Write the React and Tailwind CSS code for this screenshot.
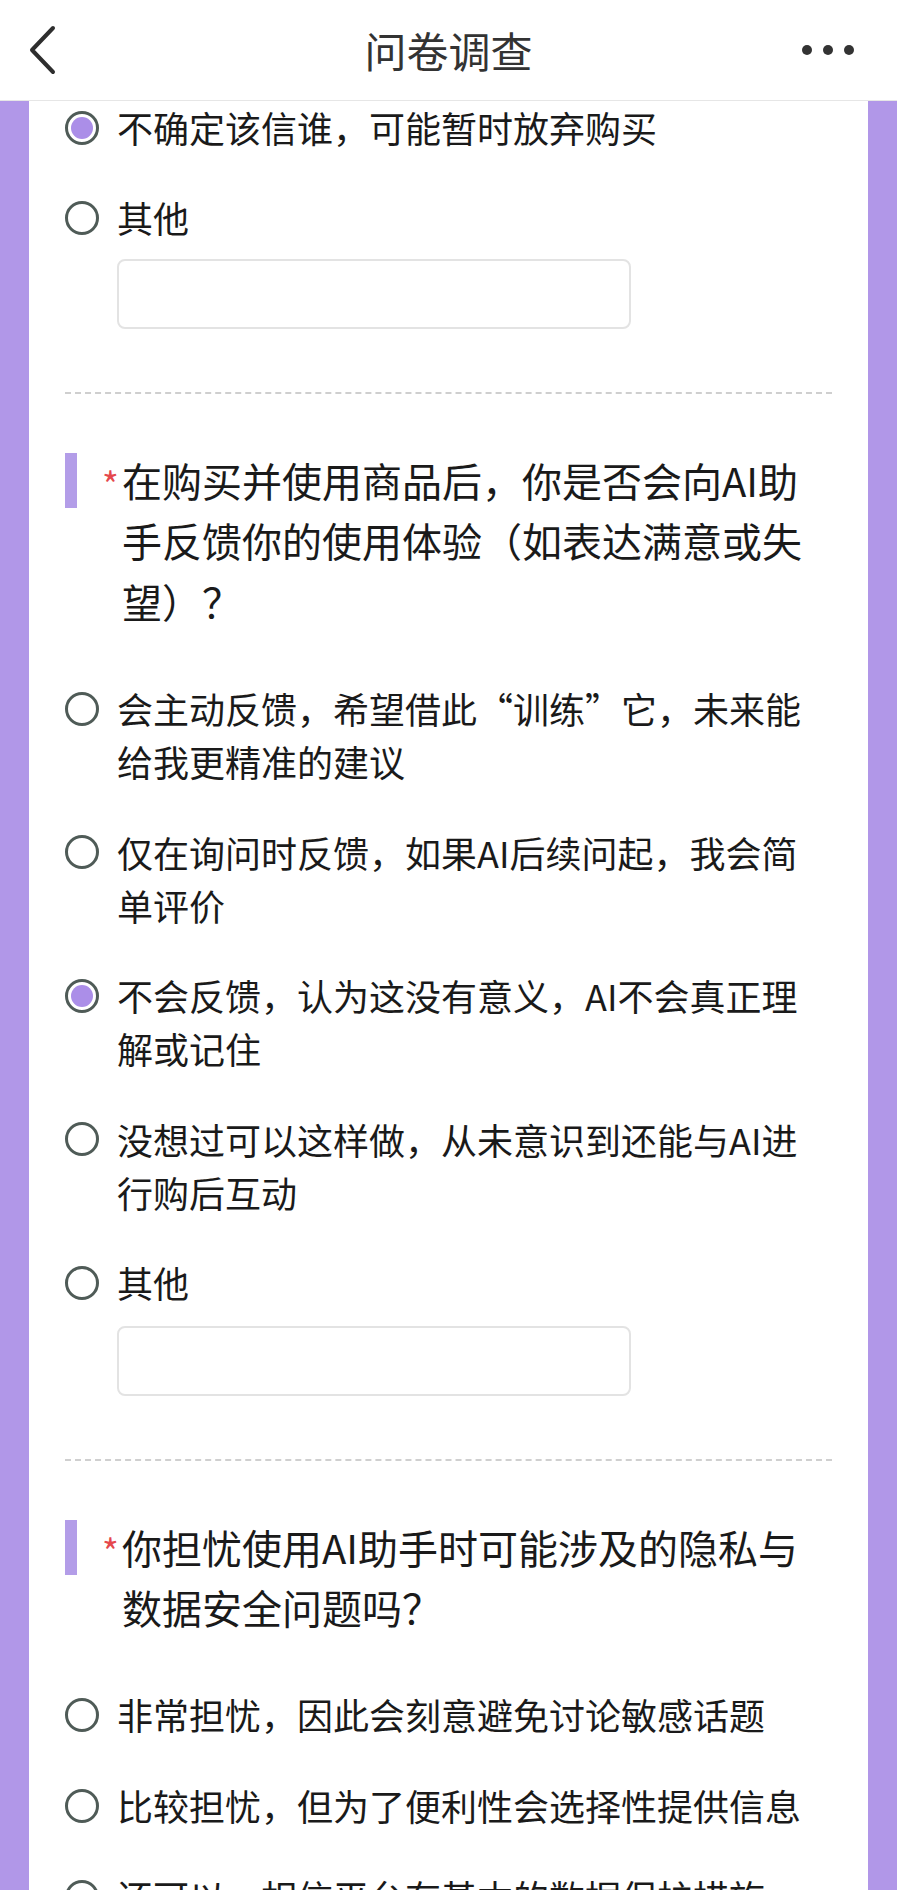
import React from "react";

const font = { fontFamily: '"Noto Sans CJK SC", "Noto Sans", sans-serif' };

// 单选圆圈
const Radio = ({ checked }) => (
    <span className="mt-[9.5px] flex h-[34px] w-[34px] shrink-0 items-center justify-center rounded-full border-[3px] border-[#4f5b57] bg-white">
        {checked && <span className="h-[22px] w-[22px] rounded-full bg-[#ab8ee8]" />}
    </span>
);

const Option = ({ lines, checked }) => (
    <div className="flex items-start gap-[18px]">
        <Radio checked={checked} />
        <div className="text-[36px] leading-[53px] text-[#1a1a1a] whitespace-nowrap">
            {lines.map((l) => (
                <div key={l}>{l}</div>
            ))}
        </div>
    </div>
);

const OtherInput = ({ className }) => (
    <div className={`ml-[52px] h-[70px] w-[514px] rounded-[8px] border-2 border-[#e3e3e3] bg-white ${className}`} />
);

const Question = ({ lines }) => (
    <div className="flex items-start">
        <span className="h-[55px] w-[12px] shrink-0 bg-[#b39de8]" />
        <span className="ml-[25px] w-[20px] shrink-0 text-[36px] leading-[60px] text-[#e5484d]">*</span>
        <div className="-mt-[3px] text-[40px] leading-[60.5px] text-[#1a1a1a] whitespace-nowrap">
            {lines.map((l) => (
                <div key={l}>{l}</div>
            ))}
        </div>
    </div>
);

const Divider = () => <div className="border-t-2 border-dashed border-[#cfcfcf]" />;

export default function App() {
    return (
        <div className="h-[1890px] w-[897px] overflow-hidden bg-[#b197e8]" style={font}>
            {/* 顶部导航 */}
            <div className="grid h-[101px] grid-cols-[1fr_auto_1fr] items-center border-b border-[#e6e6e6] bg-white px-[28px]">
                <svg width="30" height="50" viewBox="0 0 30 50" fill="none" stroke="#2e2e2e" strokeWidth="4" strokeLinecap="round" strokeLinejoin="round">
                    <path d="M25 3 L4 25 L25 47" />
                </svg>
                <div className="text-[42px] leading-none text-[#333]">问卷调查</div>
                <div className="flex items-center justify-end gap-[11px] pr-[15px]">
                    <span className="h-[10px] w-[10px] rounded-full bg-[#333]" />
                    <span className="h-[10px] w-[10px] rounded-full bg-[#333]" />
                    <span className="h-[10px] w-[10px] rounded-full bg-[#333]" />
                </div>
            </div>

            {/* 问卷内容 */}
            <div className="mx-[29px] bg-white px-[36px]">
                <div className="flex flex-col gap-[37px]">
                    <Option checked lines={["不确定该信谁，可能暂时放弃购买"]} />
                    <Option lines={["其他"]} />
                </div>
                <OtherInput className="mt-[14.5px]" />
                <div className="mt-[63px]">
                    <Divider />
                </div>

                <div className="mt-[59px]">
                    <Question lines={["在购买并使用商品后，你是否会向AI助", "手反馈你的使用体验（如表达满意或失", "望）？"]} />
                </div>
                <div className="mt-[51px] flex flex-col gap-[37.5px]">
                    <Option lines={["会主动反馈，希望借此“训练”它，未来能", "给我更精准的建议"]} />
                    <Option lines={["仅在询问时反馈，如果AI后续问起，我会简", "单评价"]} />
                    <Option checked lines={["不会反馈，认为这没有意义，AI不会真正理", "解或记住"]} />
                    <Option lines={["没想过可以这样做，从未意识到还能与AI进", "行购后互动"]} />
                    <Option lines={["其他"]} />
                </div>
                <OtherInput className="mt-[16.5px]" />
                <div className="mt-[63px]">
                    <Divider />
                </div>

                <div className="mt-[59px]">
                    <Question lines={["你担忧使用AI助手时可能涉及的隐私与", "数据安全问题吗？"]} />
                </div>
                <div className="mt-[50.5px] flex flex-col gap-[38px] pb-[200px]">
                    <Option lines={["非常担忧，因此会刻意避免讨论敏感话题"]} />
                    <Option lines={["比较担忧，但为了便利性会选择性提供信息"]} />
                    <Option lines={["还可以，相信平台有基本的数据保护措施"]} />
                </div>
            </div>
        </div>
    );
}
